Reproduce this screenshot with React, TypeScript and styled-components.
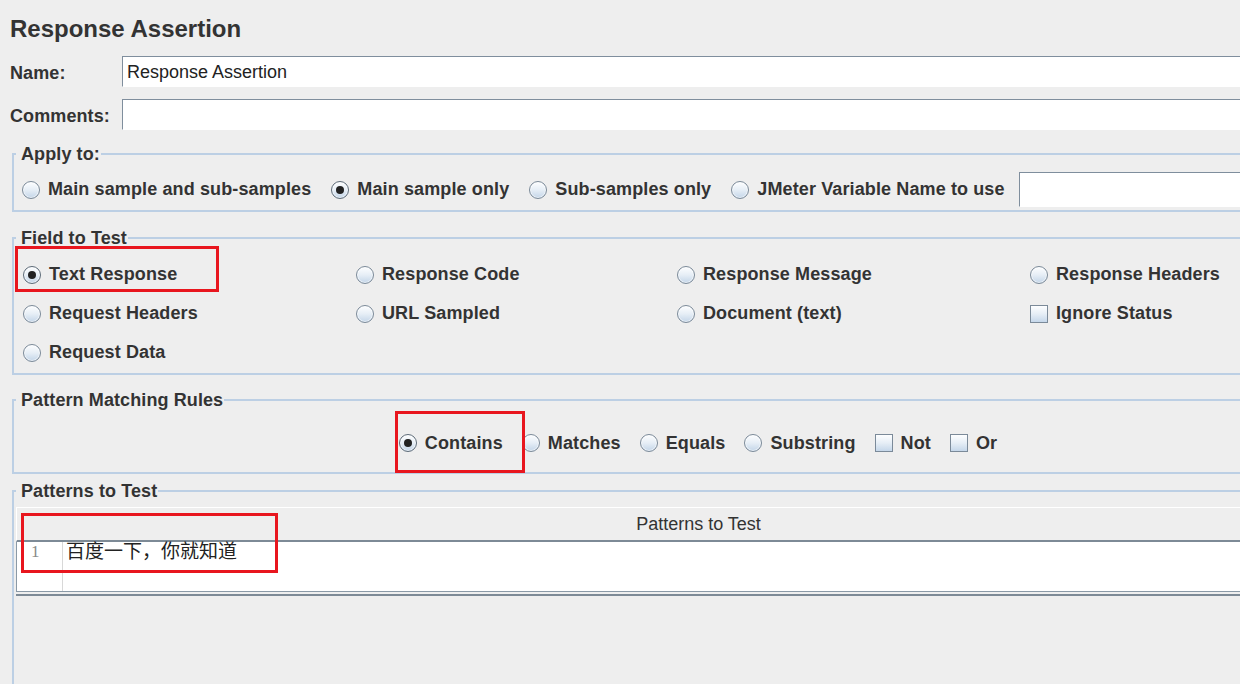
import React from "react";
import styled, { createGlobalStyle, css } from "styled-components";

const GlobalStyle = createGlobalStyle`
	html, body {
		margin: 0;
		padding: 0;
		background: #eeeeee;
		overflow: hidden;
	}
	body {
		font-family: "Liberation Sans", Arial, sans-serif;
		color: #333;
	}
`;

const Page = styled.div`
	position: relative;
	box-sizing: border-box;
	width: 1396px;
	height: 684px;
	padding: 15px 0 0 10px;
	overflow: hidden;
`;

const Title = styled.h1`
	margin: 0;
	font-size: 24px;
	line-height: 28px;
	font-weight: bold;
	color: #333;
`;

const FormRow = styled.div<{ $top: number }>`
	display: grid;
	grid-template-columns: 112px 1fr;
	align-items: center;
	height: 31px;
	margin-top: ${(p) => p.$top}px;
`;

const FieldLabel = styled.label`
	padding-top: 3px;
	font-size: 18px;
	font-weight: bold;
	color: #333;
	letter-spacing: 0.1px;
`;

const TextInput = styled.input<{ $h?: number }>`
	box-sizing: border-box;
	height: ${(p) => p.$h ?? 31}px;
	width: 100%;
	min-width: 0;
	margin: 0;
	padding: 2px 4px 0;
	border: 1px solid;
	border-color: #7f8e9d #e4e4e4 #ffffff #7f8e9d;
	background: #fff;
	font-family: "Liberation Sans", Arial, sans-serif;
	font-size: 18px;
	color: #222;
	outline: none;
`;

const Group = styled.fieldset<{ $top: number; $pt: number; $pb: number; $grow?: boolean }>`
	box-sizing: border-box;
	width: 1372px;
	margin: ${(p) => p.$top}px 0 0 2px;
	padding: ${(p) => p.$pt}px 0 ${(p) => p.$pb}px 0;
	border: 2px solid #bccfe4;
	min-width: 0;
	${(p) =>
		p.$grow &&
		css`
			height: 260px;
		`}
`;

const Legend = styled.legend`
	margin-left: 2px;
	padding: 0 1px 0 5px;
	font-size: 18px;
	line-height: 20px;
	font-weight: bold;
	color: #333;
	letter-spacing: 0.1px;
`;

const OptionRow = styled.div<{ $pl?: number; $center?: boolean; $h: number; $gap?: number }>`
	display: flex;
	align-items: center;
	gap: ${(p) => p.$gap ?? 20}px;
	height: ${(p) => p.$h}px;
	padding-left: ${(p) => p.$pl ?? 0}px;
	justify-content: ${(p) => (p.$center ? "center" : "flex-start")};
`;

const OptionGrid = styled.div`
	display: grid;
	grid-template-columns: 333px 321px 353px 1fr;
	grid-auto-rows: 39px;
	align-items: center;
	padding-left: 9px;
`;

const Option = styled.label`
	display: inline-flex;
	align-items: center;
	gap: 8px;
	font-size: 18px;
	font-weight: bold;
	color: #333;
	letter-spacing: 0.12px;
	white-space: nowrap;
	flex: none;
`;

const Radio = styled.span<{ $on?: boolean }>`
	position: relative;
	box-sizing: border-box;
	width: 18px;
	height: 18px;
	flex: none;
	border-radius: 50%;
	border: 1px solid #7b8a99;
	background: linear-gradient(#fdfeff, #e6eef6 50%, #c3d5e8);
	box-shadow: inset 0 0 0 1px rgba(255, 255, 255, 0.6);
	${(p) =>
		p.$on &&
		css`
			border-color: #5d6b78;
			&::after {
				content: "";
				position: absolute;
				inset: 4px;
				border-radius: 50%;
				background: #222;
			}
		`}
`;

const Check = styled.span`
	box-sizing: border-box;
	width: 18px;
	height: 18px;
	flex: none;
	border: 1px solid #7b8a99;
	background: linear-gradient(#fdfeff, #e6eef6 50%, #c5d7ea);
`;

const VarInput = styled(TextInput)`
	flex: 1;
	margin-left: -6px;
`;

const Table = styled.div`
	margin: 6px 2px 0 2px;
`;

const TableHeader = styled.div`
	box-sizing: border-box;
	height: 35px;
	border-top: 1px solid #fff;
	border-left: 1px solid #fff;
	border-bottom: 2px solid #7d8a96;
	display: flex;
	align-items: center;
	justify-content: center;
	font-size: 18px;
	color: #333;
`;

const Editor = styled.div`
	display: flex;
	height: 49px;
	background: #fff;
	border-left: 1px solid #8a99a6;
	border-bottom: 1px solid #8a99a6;
`;

const Gutter = styled.div`
	box-sizing: border-box;
	width: 46px;
	flex: none;
	border-right: 1px solid #d8d8d8;
	padding-left: 14px;
	font-family: "Liberation Serif", serif;
	font-size: 17px;
	line-height: 20px;
	color: #8a8a8a;
`;

const Code = styled.div`
	padding-left: 3px;
	font-family: "Liberation Serif", "Noto Sans CJK SC", serif;
	font-size: 19px;
	line-height: 20px;
	color: #222;
`;

const EditorEdge = styled.div`
	margin-top: 2px;
	height: 2px;
	background: #7d8a96;
`;

const Mark = styled.div`
	position: absolute;
	box-sizing: border-box;
	border: 3px solid #e8161e;
	pointer-events: none;
`;

const marks = [
	{ left: 15, top: 246, width: 204, height: 46 },
	{ left: 395, top: 411, width: 130, height: 62 },
	{ left: 21, top: 513, width: 257, height: 60 },
];

export default function App() {
	return (
		<>
			<GlobalStyle />
			<Page>
				<Title>Response Assertion</Title>
				<FormRow $top={13}>
					<FieldLabel>Name:</FieldLabel>
					<TextInput defaultValue="Response Assertion" />
				</FormRow>
				<FormRow $top={12}>
					<FieldLabel>Comments:</FieldLabel>
					<TextInput defaultValue="" />
				</FormRow>

				<Group $top={14} $pt={8} $pb={3}>
					<Legend>Apply to:</Legend>
					<OptionRow $pl={8} $h={35}>
						<Option>
							<Radio />
							Main sample and sub-samples
						</Option>
						<Option>
							<Radio $on />
							Main sample only
						</Option>
						<Option>
							<Radio />
							Sub-samples only
						</Option>
						<Option>
							<Radio />
							JMeter Variable Name to use
						</Option>
						<VarInput $h={35} defaultValue="" />
					</OptionRow>
				</Group>

				<Group $top={16} $pt={7} $pb={1}>
					<Legend>Field to Test</Legend>
					<OptionGrid>
						<Option>
							<Radio $on />
							Text Response
						</Option>
						<Option>
							<Radio />
							Response Code
						</Option>
						<Option>
							<Radio />
							Response Message
						</Option>
						<Option>
							<Radio />
							Response Headers
						</Option>
						<Option>
							<Radio />
							Request Headers
						</Option>
						<Option>
							<Radio />
							URL Sampled
						</Option>
						<Option>
							<Radio />
							Document (text)
						</Option>
						<Option>
							<Check />
							Ignore Status
						</Option>
						<Option>
							<Radio />
							Request Data
						</Option>
					</OptionGrid>
				</Group>

				<Group $top={15} $pt={18} $pb={14}>
					<Legend>Pattern Matching Rules</Legend>
					<OptionRow $center $h={30} $gap={19}>
						<Option>
							<Radio $on />
							Contains
						</Option>
						<Option>
							<Radio />
							Matches
						</Option>
						<Option>
							<Radio />
							Equals
						</Option>
						<Option>
							<Radio />
							Substring
						</Option>
						<Option>
							<Check />
							Not
						</Option>
						<Option>
							<Check />
							Or
						</Option>
					</OptionRow>
				</Group>

				<Group $top={7} $pt={0} $pb={0} $grow>
					<Legend>Patterns to Test</Legend>
					<Table>
						<TableHeader>Patterns to Test</TableHeader>
						<Editor>
							<Gutter>1</Gutter>
							<Code>百度一下，你就知道</Code>
						</Editor>
						<EditorEdge />
					</Table>
				</Group>

				{marks.map((m, i) => (
					<Mark key={i} style={m} />
				))}
			</Page>
		</>
	);
}
